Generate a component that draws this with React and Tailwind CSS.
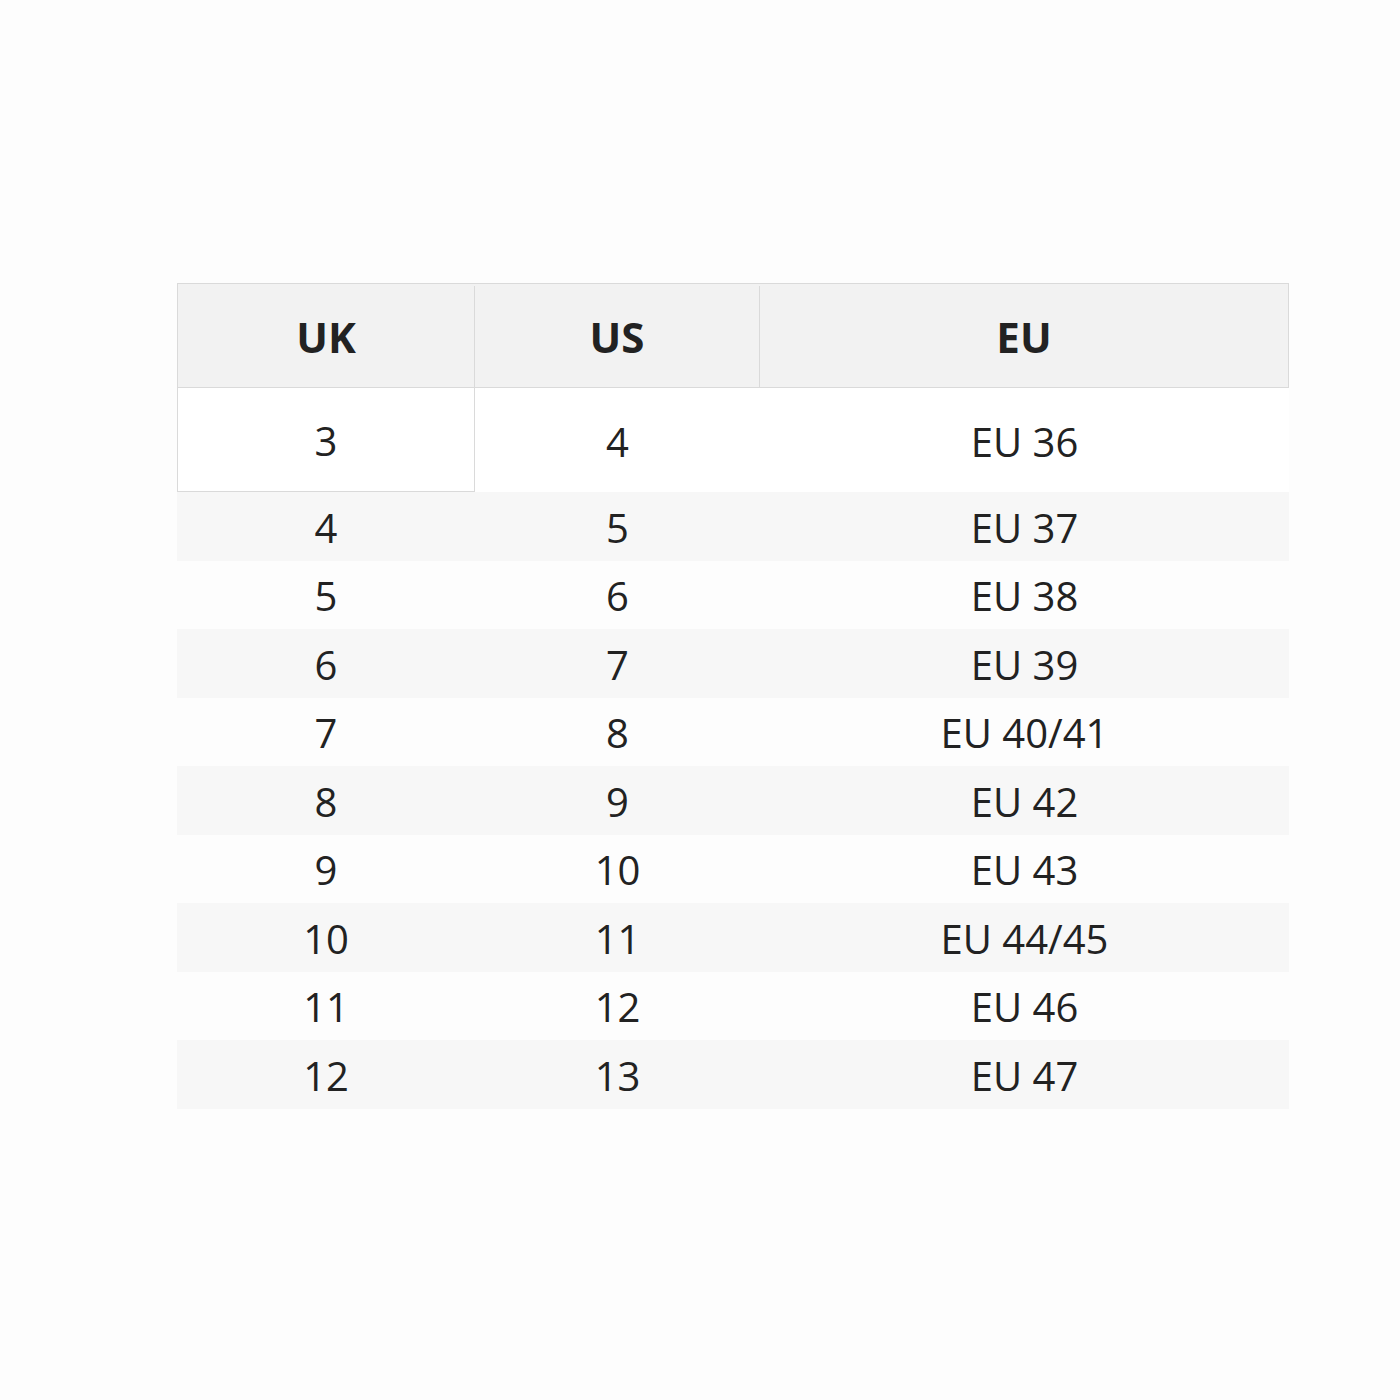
const rows = [
  ['4', '5', 'EU 37'],
  ['5', '6', 'EU 38'],
  ['6', '7', 'EU 39'],
  ['7', '8', 'EU 40/41'],
  ['8', '9', 'EU 42'],
  ['9', '10', 'EU 43'],
  ['10', '11', 'EU 44/45'],
  ['11', '12', 'EU 46'],
  ['12', '13', 'EU 47'],
];

export default function App() {
  return (
    <div className="min-h-[1400px] w-[1400px] bg-[#fdfdfd] pt-[283px] pl-[177px] font-['Open_Sans',sans-serif] text-[#222]">
      <div className="w-[1112px]">
        {/* Header */}
        <div className="flex h-[105px] border border-[#dadada] bg-[#f2f2f2] pt-[2px] text-[42px] font-bold">
          <div className="flex w-[297px] items-center justify-center border-r border-[#dadada]">UK</div>
          <div className="flex w-[285px] items-center justify-center border-r border-[#dadada]">US</div>
          <div className="flex flex-1 items-center justify-center">EU</div>
        </div>

        {/* First row */}
        <div className="flex h-[104px] bg-white text-[40px]">
          <div className="flex w-[298px] items-center justify-center border border-t-0 border-[#dadada] pt-[3px]">3</div>
          <div className="flex w-[285px] items-center justify-center pt-[3px]">4</div>
          <div className="flex flex-1 items-center justify-center pt-[3px]">EU 36</div>
        </div>

        {rows.map((r, i) => (
          <div
            key={r[0]}
            className={`flex h-[68.5px] pt-[3px] text-[40px] ${i % 2 === 0 ? 'bg-[#f7f7f7]' : 'bg-[#fdfdfd]'}`}
          >
            <div className="flex w-[298px] items-center justify-center">{r[0]}</div>
            <div className="flex w-[285px] items-center justify-center">{r[1]}</div>
            <div className="flex flex-1 items-center justify-center">{r[2]}</div>
          </div>
        ))}
      </div>
    </div>
  );
}
